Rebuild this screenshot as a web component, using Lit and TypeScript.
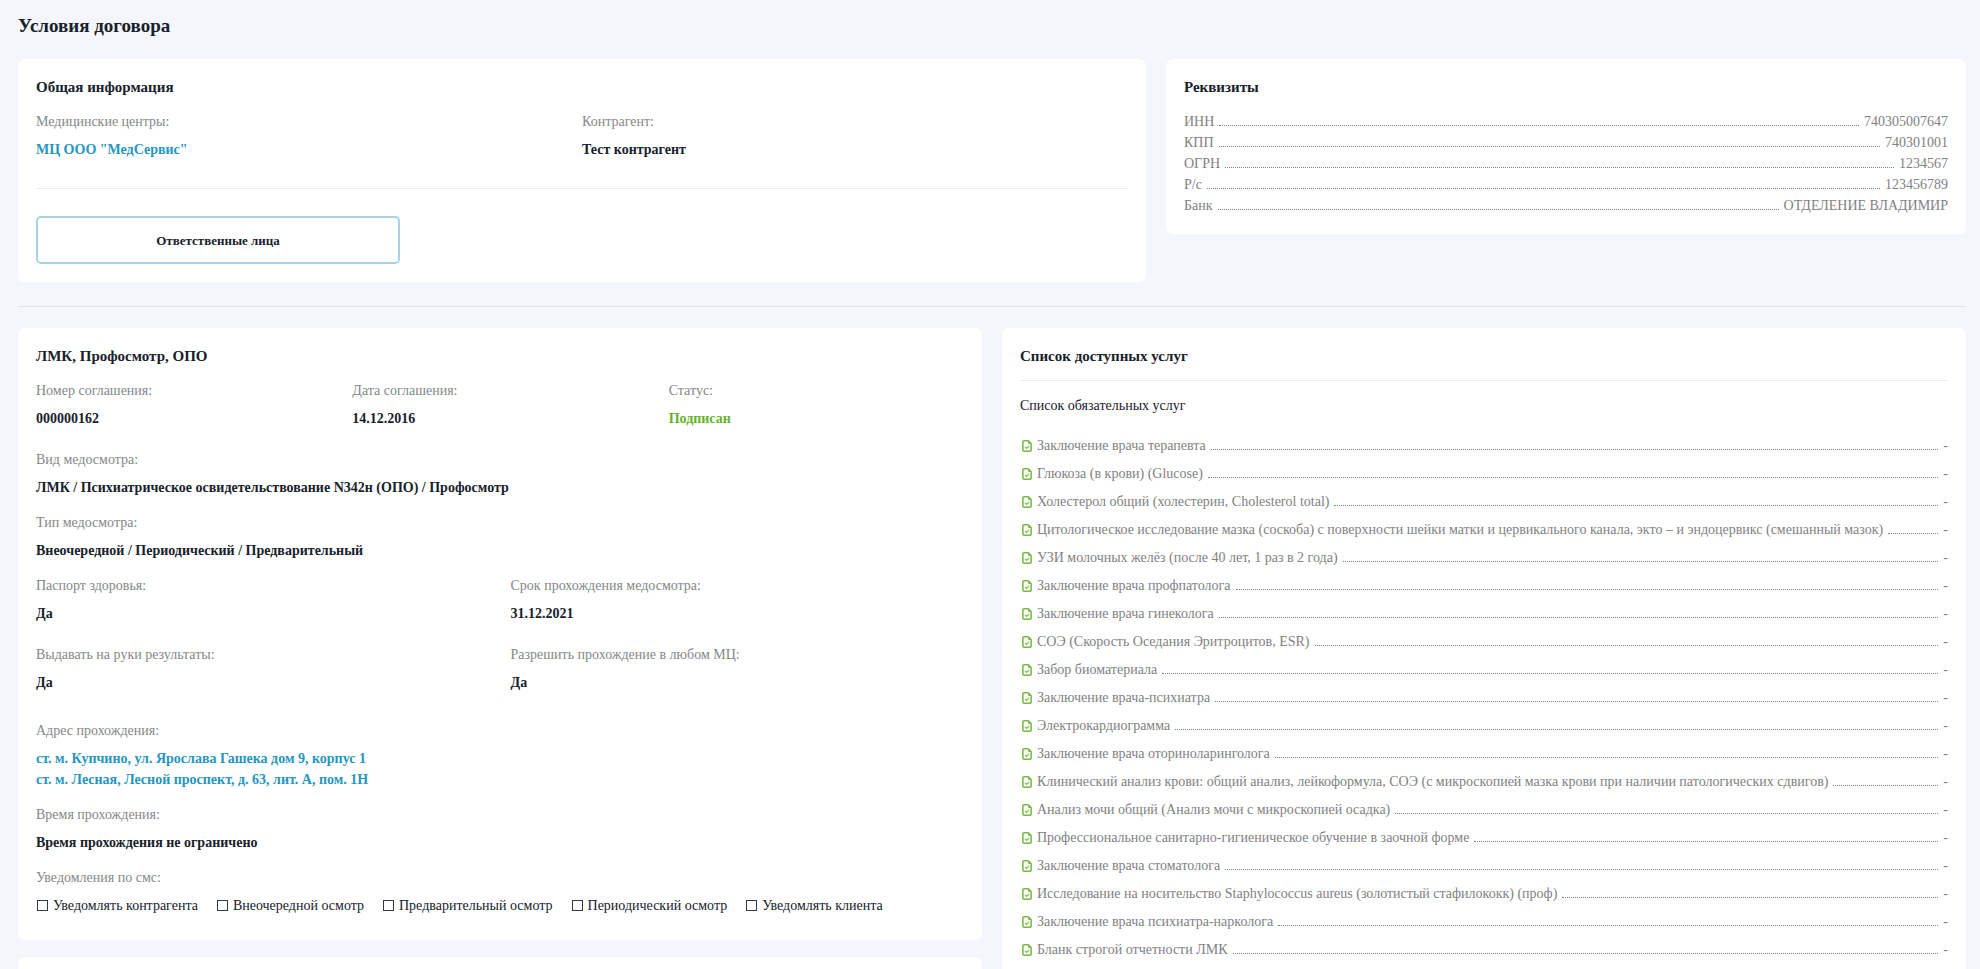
import { LitElement, html, css, svg } from "lit";
import { customElement, property } from "lit/decorators.js";

const requisites: [string, string][] = [
  ["ИНН", "740305007647"],
  ["КПП", "740301001"],
  ["ОГРН", "1234567"],
  ["Р/с", "123456789"],
  ["Банк", "ОТДЕЛЕНИЕ ВЛАДИМИР"],
];

const services: string[] = [
  "Заключение врача терапевта",
  "Глюкоза (в крови) (Glucose)",
  "Холестерол общий (холестерин, Cholesterol total)",
  "Цитологическое исследование мазка (соскоба) с поверхности шейки матки и цервикального канала, экто – и эндоцервикс (смешанный мазок)",
  "УЗИ молочных желёз (после 40 лет, 1 раз в 2 года)",
  "Заключение врача профпатолога",
  "Заключение врача гинеколога",
  "СОЭ (Скорость Оседания Эритроцитов, ESR)",
  "Забор биоматериала",
  "Заключение врача-психиатра",
  "Электрокардиограмма",
  "Заключение врача оториноларинголога",
  "Клинический анализ крови: общий анализ, лейкоформула, СОЭ (с микроскопией мазка крови при наличии патологических сдвигов)",
  "Анализ мочи общий (Анализ мочи с микроскопией осадка)",
  "Профессиональное санитарно-гигиеническое обучение в заочной форме",
  "Заключение врача стоматолога",
  "Исследование на носительство Staphylococcus aureus (золотистый стафилококк) (проф)",
  "Заключение врача психиатра-нарколога",
  "Бланк строгой отчетности ЛМК",
];

const notifications: string[] = [
  "Уведомлять контрагента",
  "Внеочередной осмотр",
  "Предварительный осмотр",
  "Периодический осмотр",
  "Уведомлять клиента",
];

const documentIcon = svg`
  <path d="M2.1 0.8h4.300l3 3v6.700a1.300 1.300 0 0 1-1.300 1.300H2.100A1.300 1.300 0 0 1 .8 10.500V2.100A1.300 1.300 0 0 1 2.100.8z"
    fill="none" stroke="currentColor" stroke-width="1.600" stroke-linejoin="round"/>
  <path d="M6.100.8v2.100a1.200 1.200 0 0 0 1.200 1.200h2.100z" fill="currentColor"/>
  <path d="M3.300 7.600l1.300 1.200 2.400-2.400" fill="none" stroke="currentColor" stroke-width="1.200"
    stroke-linecap="round" stroke-linejoin="round"/>`;

/** A caption with its value below it. */
@customElement("info-field")
class InfoField extends LitElement {
  @property() label = "";

  static styles = css`
    :host { display: block; }
    .label { color: #858789; margin-bottom: 7px; }
    .value { color: #17212b; font-weight: 700; }
  `;

  render() {
    return html`<div class="label">${this.label}</div><div class="value"><slot></slot></div>`;
  }
}

/** Name and value joined by a dotted leader. */
@customElement("leader-row")
class LeaderRow extends LitElement {
  @property() name = "";
  @property() value = "";

  static styles = css`
    :host { display: flex; align-items: center; color: #7f8184; }
    .leader { flex: 1; min-width: 20px; height: 7px; margin: 0 5px; border-bottom: 1px dotted #7f8184; }
    .value { text-align: right; }
  `;

  render() {
    return html`<slot></slot><span class="name">${this.name}</span><span class="leader"></span
      ><span class="value">${this.value}</span>`;
  }
}

@customElement("app-root")
class AppRoot extends LitElement {
  static styles = css`
    * { box-sizing: border-box; }
    :host {
      display: block;
      box-sizing: border-box;
      height: 100vh;
      overflow: hidden;
      padding: 15px 14px 0 18px;
      background: #f4f6fb;
      color: #17212b;
      font: 14px/21px "Liberation Serif", "Times New Roman", serif;
    }
    h1 { margin: 0 0 23px; font-size: 19px; line-height: 21px; }
    h2 { margin: 0 0 13px; font-size: 15px; line-height: 21px; }
    h3 { margin: 0 0 19px; font-size: 14px; font-weight: 400; }
    hr { height: 1px; margin: 0; border: 0; background: #ececee; }
    a { color: #2596be; text-decoration: none; display: block; width: fit-content; }
    .row { display: grid; grid-template-columns: repeat(12, minmax(0, 1fr)); gap: 20px; align-items: start; }
    .seven { grid-column: span 7; }
    .five { grid-column: span 5; }
    .six { grid-column: span 6; }
    .card { background: #fff; border-radius: 7px; padding: 18px; }
    .separator { margin: 24px 0 21px; background: #dfe2e8; }
    .stack { display: flex; flex-direction: column; gap: 17px; }
    .halves { display: grid; grid-template-columns: repeat(2, 1fr); }
    .thirds { display: grid; grid-template-columns: repeat(3, 1fr); }
    .gutter { column-gap: 21px; }
    .rule { margin: 28px 0 27px; }
    .outline {
      display: block;
      width: calc(100% / 3);
      height: 48px;
      border: 2px solid #a9d2e6;
      border-radius: 5px;
      background: #fff;
      color: inherit;
      font: inherit;
      font-size: 13px;
      font-weight: 700;
    }
    .agreement { padding-bottom: 24px; }
    .fields { display: flex; flex-direction: column; gap: 14px; }
    .group { display: flex; flex-direction: column; gap: 20px; }
    .loose { margin-bottom: 6px; }
    .section { margin-bottom: 13px; }
    .signed { color: #67b22a; }
    .checks { display: flex; flex-wrap: wrap; column-gap: 18px; font-weight: 400; }
    .check { display: flex; align-items: center; gap: 5px; }
    .check input { appearance: none; width: 11px; height: 11px; margin: 0 0 0 1px; border: 1px solid #333b44; background: #fff; }
    .check input:checked { background: #2596be; }
    .services hr { margin-bottom: 14px; }
    .list { display: flex; flex-direction: column; gap: 7px; margin: 0; padding: 0; list-style: none; }
    .icon { flex: none; width: 10px; height: 12px; margin: 0 5px 0 2px; color: #76b943; }
    .next { height: 60px; }
  `;

  render() {
    return html`
      <h1>Условия договора</h1>
      <div class="row">
        <section class="card seven">
          <h2>Общая информация</h2>
          <div class="halves">
            <info-field label="Медицинские центры:"><a href="#">МЦ ООО "МедСервис"</a></info-field>
            <info-field label="Контрагент:">Тест контрагент</info-field>
          </div>
          <hr class="rule" />
          <button class="outline" type="button">Ответственные лица</button>
        </section>
        <section class="card five">
          <h2>Реквизиты</h2>
          ${requisites.map(([name, value]) => html`<leader-row .name=${name} .value=${value}></leader-row>`)}
        </section>
      </div>
      <hr class="separator" />
      <div class="row">
        <div class="stack six">
          <section class="card agreement">
            <h2>ЛМК, Профосмотр, ОПО</h2>
            <div class="fields">
              <div class="thirds gutter loose">
                <info-field label="Номер соглашения:">000000162</info-field>
                <info-field label="Дата соглашения:">14.12.2016</info-field>
                <info-field label="Статус:"><span class="signed">Подписан</span></info-field>
              </div>
              <info-field label="Вид медосмотра:">ЛМК / Психиатрическое освидетельствование N342н (ОПО) / Профосмотр</info-field>
              <info-field label="Тип медосмотра:">Внеочередной / Периодический / Предварительный</info-field>
              <div class="group section">
                <div class="halves gutter">
                  <info-field label="Паспорт здоровья:">Да</info-field>
                  <info-field label="Срок прохождения медосмотра:">31.12.2021</info-field>
                </div>
                <div class="halves gutter">
                  <info-field label="Выдавать на руки результаты:">Да</info-field>
                  <info-field label="Разрешить прохождение в любом МЦ:">Да</info-field>
                </div>
              </div>
              <info-field label="Адрес прохождения:">
                <a href="#">ст. м. Купчино, ул. Ярослава Гашека дом 9, корпус 1</a>
                <a href="#">ст. м. Лесная, Лесной проспект, д. 63, лит. А, пом. 1Н</a>
              </info-field>
              <info-field label="Время прохождения:">Время прохождения не ограничено</info-field>
              <info-field label="Уведомления по смс:">
                <div class="checks">
                  ${notifications.map((name) => html`<label class="check"><input type="checkbox" />${name}</label>`)}
                </div>
              </info-field>
            </div>
          </section>
          <section class="card next"></section>
        </div>
        <section class="card services six">
          <h2>Список доступных услуг</h2>
          <hr />
          <h3>Список обязательных услуг</h3>
          <ul class="list">
            ${services.map(
              (name) => html`<li>
                <leader-row .name=${name} value="-">
                  <svg class="icon" viewBox="0 0 10.200 12.600" aria-hidden="true">${documentIcon}</svg>
                </leader-row>
              </li>`
            )}
          </ul>
        </section>
      </div>
    `;
  }
}
